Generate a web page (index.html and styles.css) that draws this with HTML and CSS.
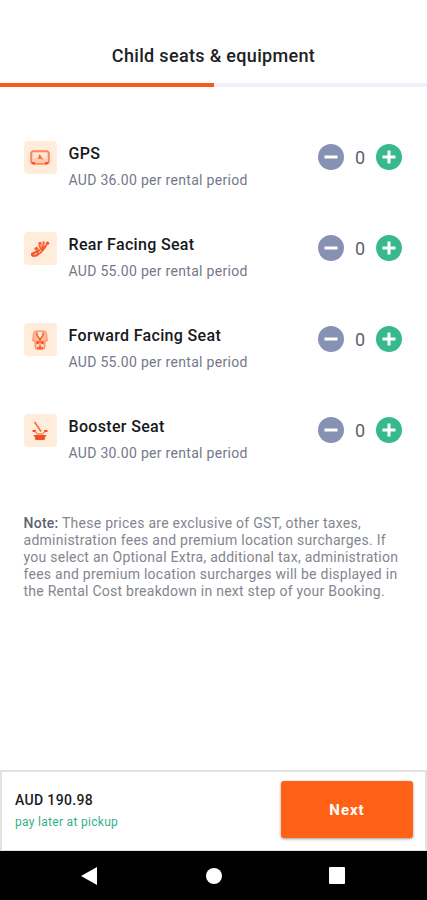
FILE: index.html
```html
<!DOCTYPE html>
<html lang="en">
<head>
    <meta charset="UTF-8">
    <meta name="viewport" content="width=device-width, initial-scale=1.0">
    <title>Child seats &amp; equipment</title>
    <link rel="stylesheet" href="styles.css">
</head>
<body>

    <header>
        <h1>Child seats &amp; equipment</h1>
    </header>
    <div class="progress">
        <div class="progress-done"></div>
    </div>

    <main>
        <div class="extra">
            <div class="extra-icon">
                <svg width="20" height="16" viewBox="0 0 20 16">
                    <rect x="1" y="1" width="18" height="13" rx="3" fill="#ffc9b0" stroke="#f9784e" stroke-width="1.5"/>
                    <path d="M3.500 3h13v6l-3-1-2-3h-3l-2 3-3 1z" fill="#ffe9d9"/>
                    <path d="M9.500 4l3.500 6-3-1.500L8 9.500z" fill="#f9683a"/>
                    <path d="M2 13h3M15 13h3" stroke="#f4511e" stroke-width="2"/>
                </svg>
            </div>
            <div class="extra-text">
                <h2>GPS</h2>
                <p>AUD 36.00 per rental period</p>
            </div>
            <div class="counter">
                <button class="minus" aria-label="Remove"><svg width="26" height="26" viewBox="0 0 26 26"><path d="M6.500 13h13"/></svg></button>
                <span>0</span>
                <button class="plus" aria-label="Add"><svg width="26" height="26" viewBox="0 0 26 26"><path d="M6.500 13h13M13 6.500v13"/></svg></button>
            </div>
        </div>

        <div class="extra">
            <div class="extra-icon">
                <svg width="20" height="18" viewBox="0 0 20 18">
                    <path d="M1 13l5-2 4-2 5-4 3-1.500-2 4-4 5-5 4-4 .5-2-1.500z" fill="#f9572b"/>
                    <path d="M4 8.500l3-2 2 2.500-3 2z" fill="#f9683a"/>
                    <circle cx="10" cy="3.500" r="1.800" fill="#f9683a"/>
                    <circle cx="13.500" cy="2.500" r="1.300" fill="#f9784e"/>
                    <circle cx="17.500" cy="3.300" r="1.700" fill="#f9572b"/>
                    <path d="M9 5l2 4 3-6M5 8l4 4" fill="none" stroke="#f9683a" stroke-width="1.800"/>
                    <path d="M4 14.500l3-1M9 13l2-3" stroke="#ffd9c2" stroke-width="1"/>
                </svg>
            </div>
            <div class="extra-text">
                <h2>Rear Facing Seat</h2>
                <p>AUD 55.00 per rental period</p>
            </div>
            <div class="counter">
                <button class="minus" aria-label="Remove"><svg width="26" height="26" viewBox="0 0 26 26"><path d="M6.500 13h13"/></svg></button>
                <span>0</span>
                <button class="plus" aria-label="Add"><svg width="26" height="26" viewBox="0 0 26 26"><path d="M6.500 13h13M13 6.500v13"/></svg></button>
            </div>
        </div>

        <div class="extra">
            <div class="extra-icon">
                <svg width="16" height="20" viewBox="0 0 16 20">
                    <path d="M4 1h8q2.500 0 2.500 2.500l.8 7.500h-2.300v6q0 2.500-2.500 2.500H5.500Q3 19.500 3 17v-6H.7l.8-7.500Q1.500 1 4 1z" fill="#ffb999" stroke="#f98a64" stroke-width="1"/>
                    <path d="M5.500 2h5v4L8 9 5.500 6z" fill="#ffeadb"/>
                    <path d="M5 2.500v3l3 4 3-4v-3" fill="none" stroke="#f4623a" stroke-width="1.500"/>
                    <circle cx="5.500" cy="12.500" r="1.500" fill="#f4511e"/>
                    <circle cx="10.500" cy="12.500" r="1.500" fill="#f4511e"/>
                    <path d="M4.500 15.500h2.500M9 15.500h2.500" stroke="#ffeadb" stroke-width="1.500"/>
                    <path d="M8 9v4M8 15v3M5 18h6" fill="none" stroke="#f4511e" stroke-width="1.300"/>
                </svg>
            </div>
            <div class="extra-text">
                <h2>Forward Facing Seat</h2>
                <p>AUD 55.00 per rental period</p>
            </div>
            <div class="counter">
                <button class="minus" aria-label="Remove"><svg width="26" height="26" viewBox="0 0 26 26"><path d="M6.500 13h13"/></svg></button>
                <span>0</span>
                <button class="plus" aria-label="Add"><svg width="26" height="26" viewBox="0 0 26 26"><path d="M6.500 13h13M13 6.500v13"/></svg></button>
            </div>
        </div>

        <div class="extra">
            <div class="extra-icon">
                <svg width="18" height="20" viewBox="0 0 18 20">
                    <path d="M3.500 1l6.500 9.500" stroke="#f9683a" stroke-width="1.600"/>
                    <path d="M1.500 10h3.500M13 10h3.500" stroke="#f4511e" stroke-width="2.200"/>
                    <path d="M4 10.500l2.500 2.500h5l2.500-2.500" fill="none" stroke="#f98a64" stroke-width="1.500"/>
                    <path d="M2.500 14h13q0 1.500-1.500 2v1.500q0 1.500-1.500 1.500h-7Q4 19 4 17.500V16q-1.500-.5-1.500-2z" fill="#f4511e"/>
                </svg>
            </div>
            <div class="extra-text">
                <h2>Booster Seat</h2>
                <p>AUD 30.00 per rental period</p>
            </div>
            <div class="counter">
                <button class="minus" aria-label="Remove"><svg width="26" height="26" viewBox="0 0 26 26"><path d="M6.500 13h13"/></svg></button>
                <span>0</span>
                <button class="plus" aria-label="Add"><svg width="26" height="26" viewBox="0 0 26 26"><path d="M6.500 13h13M13 6.500v13"/></svg></button>
            </div>
        </div>

        <p class="note"><b>Note:</b> These prices are exclusive of GST, other taxes,<br>
            administration fees and premium location surcharges. If<br>
            you select an Optional Extra, additional tax, administration<br>
            fees and premium location surcharges will be displayed in<br>
            the Rental Cost breakdown in next step of your Booking.</p>
    </main>

    <footer>
        <div class="total">
            <strong>AUD 190.98</strong>
            <span>pay later at pickup</span>
        </div>
        <button class="next">Next</button>
    </footer>

    <nav>
        <svg width="17" height="18" viewBox="0 0 17 18"><path d="M16 0v18L0 9z"/></svg>
        <svg width="16" height="16" viewBox="0 0 16 16"><circle cx="8" cy="8" r="8"/></svg>
        <svg width="16" height="17" viewBox="0 0 16 17"><rect width="16" height="17" rx="1"/></svg>
    </nav>

</body>
</html>
```
FILE: styles.css
```css
*{
    margin: 0;
    padding: 0;
    box-sizing: border-box;
}

body{
    display: flex;
    flex-direction: column;
    height: 900px;
    background-color: white;
    font-family: Roboto, sans-serif;
}

header{
    height: 83px;
    padding-top: 44px;
    text-align: center;
}

h1{
    font-size: 18px;
    line-height: 24px;
    font-weight: 500;
    letter-spacing: 0.33px;
    color: #202124;
}

.progress{
    height: 4px;
    background-color: #f0f0fd;
}

.progress-done{
    width: 50%;
    height: 4px;
    background-color: #fa5a20;
}

main{
    flex: 1;
    padding: 54px 25px 0 23.5px;
}

.extra{
    display: flex;
    height: 91px;
}

.extra-icon{
    display: flex;
    align-items: center;
    justify-content: center;
    width: 33px;
    height: 33px;
    border-radius: 4px;
    background-color: #ffecdb;
}

.extra-text{
    flex: 1;
    padding-left: 12px;
}

h2{
    padding-top: 1px;
    font-size: 16px;
    line-height: 24px;
    font-weight: 500;
    letter-spacing: 0.33px;
    color: #17181c;
}

.extra-text p{
    margin-top: 4px;
    font-size: 14px;
    line-height: 20px;
    letter-spacing: 0.3px;
    color: #74788a;
}

.counter{
    display: flex;
    align-items: center;
    height: 26px;
    margin-top: 3px;
}

.counter span{
    width: 32px;
    text-align: center;
    font-size: 18px;
    color: #5d616c;
}

.counter button{
    width: 26px;
    height: 26px;
    border: none;
    border-radius: 50%;
}

.counter svg{
    display: block;
    stroke: white;
    stroke-width: 3;
}

.minus{
    background-color: #8791b3;
}

.plus{
    background-color: #37b98d;
}

.note{
    margin-top: 10px;
    font-size: 14px;
    line-height: 17px;
    letter-spacing: 0.26px;
    white-space: nowrap;
    color: #83868f;
}

.note b{
    font-weight: 500;
    color: #5f6370;
}

footer{
    display: flex;
    justify-content: space-between;
    height: 81px;
    padding: 9px 12px 0 13px;
    border: 2px solid #e2e2e2;
    border-bottom-width: 1px;
}

.total{
    display: flex;
    flex-direction: column;
    padding-top: 10px;
}

.total strong{
    font-size: 14px;
    line-height: 18px;
    font-weight: 500;
    letter-spacing: 0.35px;
    color: #1c1c1e;
}

.total span{
    margin-top: 5px;
    font-size: 12px;
    line-height: 16px;
    letter-spacing: 0.3px;
    color: #38b089;
}

.next{
    width: 132px;
    height: 57px;
    border: none;
    border-radius: 3px;
    background-color: #ff6217;
    box-shadow: 0 1px 3px rgba(0,0,0,0.4);
    font-family: inherit;
    font-size: 15px;
    font-weight: 700;
    letter-spacing: 1px;
    color: white;
}

nav{
    display: flex;
    align-items: center;
    justify-content: space-between;
    height: 49px;
    padding: 0 82px 0 81px;
    background-color: black;
    fill: white;
}
```
